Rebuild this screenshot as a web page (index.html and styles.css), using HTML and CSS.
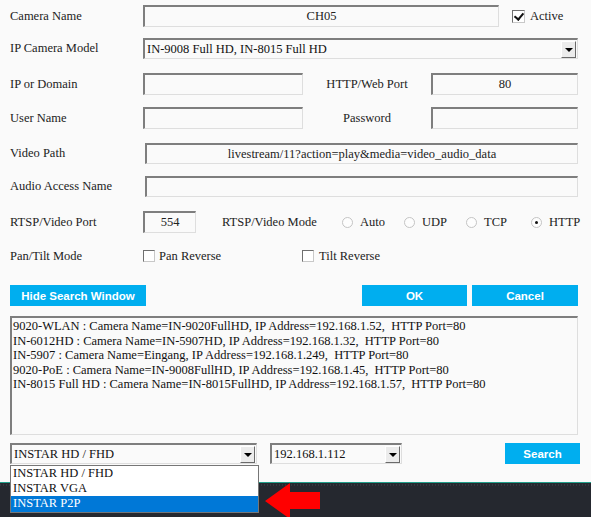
FILE: index.html
```html
<!DOCTYPE html>
<html lang="en">
<head>
  <meta charset="UTF-8" />
  <title>Camera Settings</title>
  <link rel="stylesheet" href="styles.css">
</head>
<body>
  <div class="form">
    <div class="row r-name">
      <label class="lbl">Camera Name</label>
      <input class="field w-name centered" value="CH05">
      <span class="check on"></span><span class="opt">Active</span>
    </div>
    <div class="row r-model">
      <label class="lbl">IP Camera Model</label>
      <div class="select w-model"><span class="sel-text">IN-9008 Full HD, IN-8015 Full HD</span><span class="sel-btn"></span></div>
    </div>
    <div class="row r-ip">
      <label class="lbl">IP or Domain</label>
      <input class="field w-short" value="">
      <label class="mid">HTTP/Web Port</label>
      <input class="field w-port centered" value="80">
    </div>
    <div class="row r-user">
      <label class="lbl">User Name</label>
      <input class="field w-short" value="">
      <label class="mid">Password</label>
      <input class="field w-port" type="password" value="">
    </div>
    <div class="row r-path">
      <label class="lbl wide">Video Path</label>
      <input class="field w-path centered" value="livestream/11?action=play&amp;media=video_audio_data">
    </div>
    <div class="row r-audio">
      <label class="lbl wide">Audio Access Name</label>
      <input class="field w-path" value="">
    </div>
    <div class="row r-rtsp">
      <label class="lbl">RTSP/Video Port</label>
      <input class="field w-rtsp centered" value="554">
      <label class="mode-lbl">RTSP/Video Mode</label>
      <span class="radio-grp g-auto"><span class="radio"></span>Auto</span>
      <span class="radio-grp g-udp"><span class="radio"></span>UDP</span>
      <span class="radio-grp g-tcp"><span class="radio"></span>TCP</span>
      <span class="radio-grp"><span class="radio on"></span>HTTP</span>
    </div>
    <div class="row r-pan">
      <label class="lbl">Pan/Tilt Mode</label>
      <span class="chk-grp g-pan"><span class="check small"></span>Pan Reverse</span>
      <span class="chk-grp"><span class="check small"></span>Tilt Reverse</span>
    </div>
    <div class="row r-btns">
      <button class="btn b-hide">Hide Search Window</button>
      <button class="btn b-ok">OK</button>
      <button class="btn b-cancel">Cancel</button>
    </div>
    <div class="results">9020-WLAN : Camera Name=IN-9020FullHD, IP Address=192.168.1.52,  HTTP Port=80
IN-6012HD : Camera Name=IN-5907HD, IP Address=192.168.1.32,  HTTP Port=80
IN-5907 : Camera Name=Eingang, IP Address=192.168.1.249,  HTTP Port=80
9020-PoE : Camera Name=IN-9008FullHD, IP Address=192.168.1.45,  HTTP Port=80
IN-8015 Full HD : Camera Name=IN-8015FullHD, IP Address=192.168.1.57,  HTTP Port=80</div>
    <div class="row r-search">
      <div class="select w-brand">
        <span class="sel-text">INSTAR HD / FHD</span><span class="sel-btn"></span>
        <ul class="drop">
          <li>INSTAR HD / FHD</li>
          <li>INSTAR VGA</li>
          <li class="hl">INSTAR P2P</li>
        </ul>
      </div>
      <div class="select w-net"><span class="sel-text">192.168.1.112</span><span class="sel-btn"></span></div>
      <button class="btn b-search">Search</button>
    </div>
  </div>
  <div class="band">
    <svg class="arrow" width="56" height="36" viewBox="0 0 56 36">
      <polygon points="0,18 25,0 25,9 55,9 55,26 25,26 25,36" fill="#ff0000"/>
    </svg>
  </div>
</body>
</html>
```

FILE: styles.css
```css
* { box-sizing: border-box; }
html, body { margin: 0; padding: 0; }
body {
  background: #fafafa;
  font-family: "Liberation Serif", "Times New Roman", serif;
  font-size: 12.5px;
  color: #222;
  width: 591px;
  height: 517px;
  overflow: hidden;
  display: flex;
  flex-direction: column;
}
.form {
  padding-left: 10px;
  width: 578px;
}
.row {
  display: flex;
  align-items: center;
  height: 22px;
}
.r-name { margin-top: 5px; }
.r-model { margin-top: 11px; height: 21px; }
.r-ip { margin-top: 14px; }
.r-user { margin-top: 12px; }
.r-path { margin-top: 14px; height: 21px; }
.r-audio { margin-top: 12px; height: 21px; }
.r-rtsp { margin-top: 14px; }
.r-pan { margin-top: 12px; }
.r-btns { margin-top: 18px; height: 21px; }
.r-search { margin-top: 8px; height: 21px; }

.lbl { width: 133px; flex: none; }
.lbl.wide { width: 135px; }
.mid { width: 128px; text-align: center; flex: none; }

.field {
  height: 22px;
  font: inherit;
  color: #222;
  background: #fafafa;
  border-top: 2px solid #7e7e7e;
  border-left: 2px solid #7e7e7e;
  border-right: 1px solid #dedede;
  border-bottom: 1px solid #dedede;
  padding: 0 3px;
  outline: none;
  flex: none;
}
.centered { text-align: center; }
.w-name { width: 356px; }
.w-short { width: 160px; }
.w-port { width: 147px; }
.w-path { width: 433px; height: 21px; }
.w-rtsp { width: 53px; }

/* fake select boxes */
.select {
  position: relative;
  height: 21px;
  display: flex;
  align-items: center;
  background: #fafafa;
  border-top: 2px solid #7e7e7e;
  border-left: 2px solid #7e7e7e;
  border-right: 1px solid #dedede;
  border-bottom: 1px solid #dedede;
  flex: none;
}
.sel-text { flex: 1; padding-left: 2px; white-space: nowrap; color: #111; }
.sel-btn {
  width: 15px;
  height: 17px;
  margin-right: 1px;
  background: #ececec;
  border-top: 1px solid #fff;
  border-left: 1px solid #fff;
  border-right: 1px solid #6a6a6a;
  border-bottom: 1px solid #6a6a6a;
  position: relative;
}
.sel-btn::after {
  content: "";
  position: absolute;
  left: 3px;
  top: 6px;
  border-left: 4px solid transparent;
  border-right: 4px solid transparent;
  border-top: 4px solid #000;
}
.w-model { width: 435px; }
.w-brand { width: 247px; }
.w-net { width: 132px; margin-left: 13px; }

/* checkboxes and radios */
.check {
  width: 13px;
  height: 13px;
  flex: none;
  background: #fff;
  border: 1px solid #6f6f6f;
  border-right-color: #c8c8c8;
  border-bottom-color: #c8c8c8;
  position: relative;
}
.check.small { width: 12px; height: 12px; margin-right: 5px; }
.check.on::after {
  content: "";
  position: absolute;
  left: 3px;
  top: 0;
  width: 4px;
  height: 7px;
  border-right: 2px solid #111;
  border-bottom: 2px solid #111;
  transform: rotate(40deg);
}
.r-name .check { margin-left: 13px; }
.opt { margin-left: 5px; }

.mode-lbl { margin-left: 26px; width: 120px; flex: none; }
.radio-grp { display: flex; align-items: center; flex: none; }
.g-auto, .g-udp { width: 62px; }
.g-tcp { width: 65px; }
.radio {
  width: 11px;
  height: 11px;
  border-radius: 50%;
  border: 1px solid #c4c4c4;
  background: #fdfdfd;
  margin-right: 7px;
  position: relative;
}
.radio.on::after {
  content: "";
  position: absolute;
  left: 3px;
  top: 3px;
  width: 3px;
  height: 3px;
  border-radius: 50%;
  background: #111;
}
.chk-grp { display: flex; align-items: center; flex: none; }
.g-pan { width: 159px; }
.r-pan .chk-grp .check { margin-right: 4px; }
.r-pan .chk-grp:last-child .check { margin-right: 5px; }

/* buttons */
.btn {
  height: 21px;
  border: none;
  background: #00aeef;
  color: #fff;
  font-family: "Liberation Sans", Arial, sans-serif;
  font-weight: bold;
  font-size: 11.5px;
  padding: 0;
  flex: none;
}
.b-hide { width: 136px; }
.b-ok { width: 105px; margin-left: auto; }
.b-cancel { width: 106px; margin-left: 5px; }
.b-search { width: 75px; margin-left: auto; margin-right: -2px; height: 21px; }

.results {
  margin-top: 10px;
  height: 119px;
  width: 568px;
  background: #fafafa;
  border-top: 2px solid #7e7e7e;
  border-left: 2px solid #7e7e7e;
  border-right: 1px solid #dedede;
  border-bottom: 1px solid #dedede;
  padding: 1px 0 0 1px;
  line-height: 14.6px;
  white-space: pre;
  color: #111;
  overflow: hidden;
}

/* open model list */
.drop {
  position: absolute;
  top: 20px;
  left: -2px;
  width: 249px;
  margin: 0;
  padding: 0;
  list-style: none;
  background: #fff;
  border: 1px solid #767676;
  z-index: 3;
  color: #111;
}
.drop li { height: 15px; line-height: 15px; padding-left: 2px; }
.drop li.hl { background: #0078d7; color: #fff; height: 16px; }

.band {
  margin-top: auto;
  height: 35px;
  border-top: 1px solid #1f9e89;
  background:
    repeating-linear-gradient(90deg, #34373e 0 1px, transparent 1px 3px) 0 1px / 100% 2px no-repeat,
    #25282f;
  position: relative;
}
.arrow {
  position: absolute;
  left: 265px;
  top: 0;
}
```
